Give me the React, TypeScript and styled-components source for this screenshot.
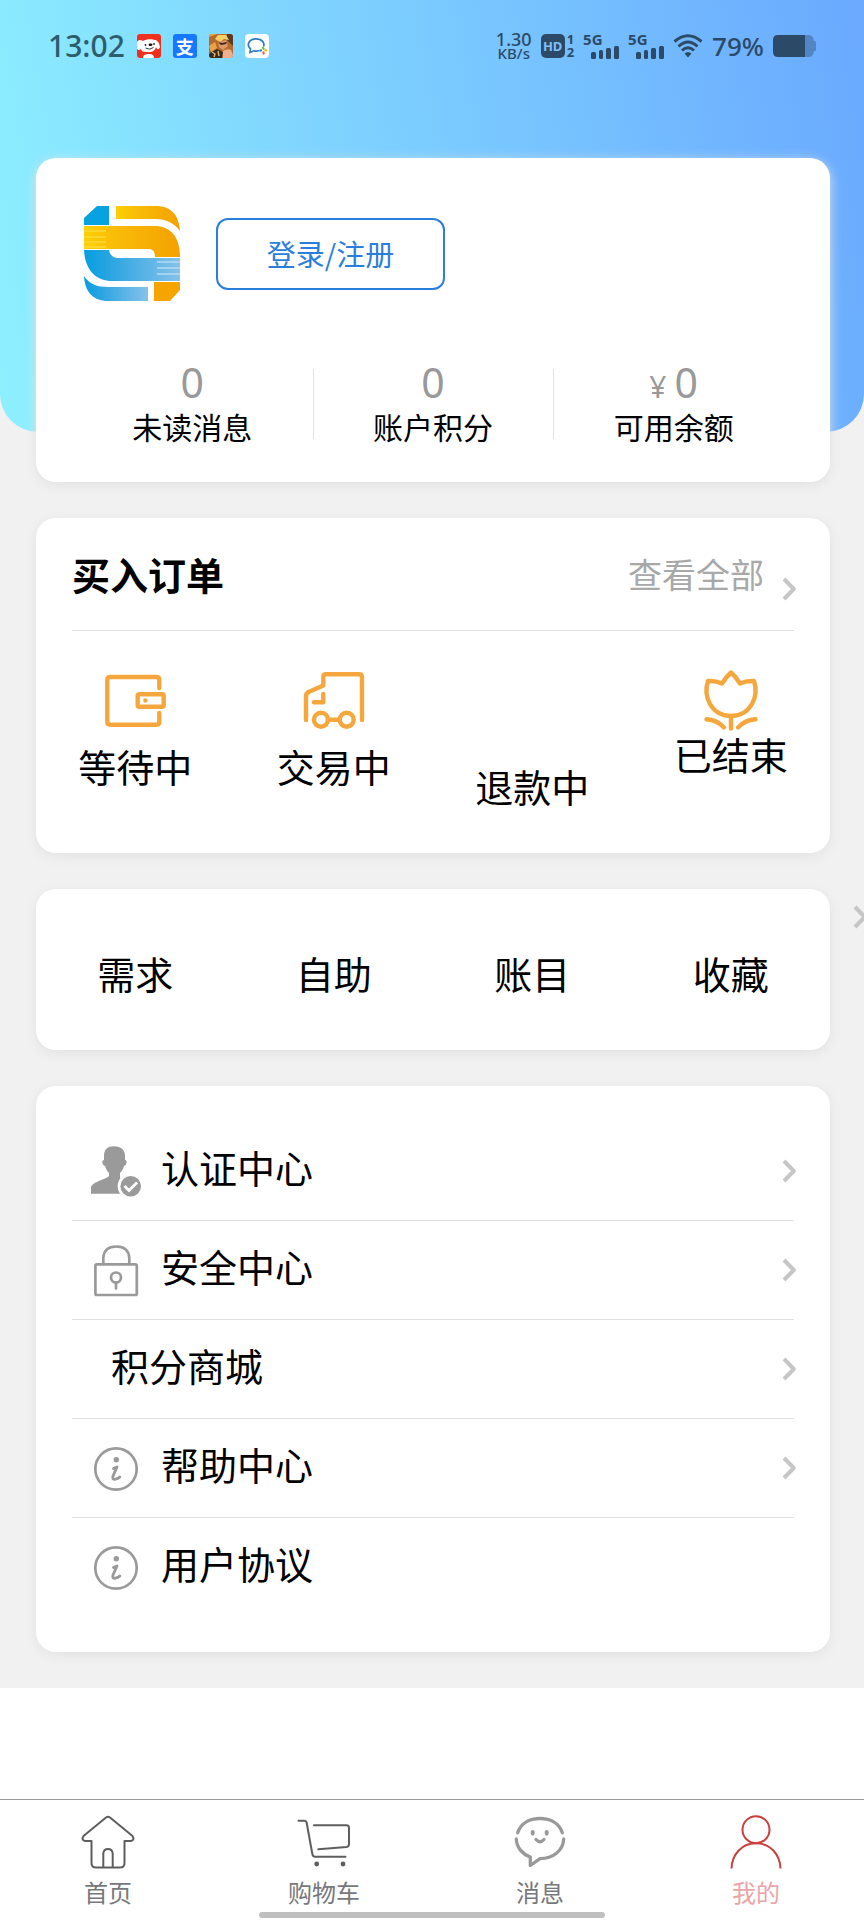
import React from "react";
import styled, { createGlobalStyle } from "styled-components";

const GlobalStyle = createGlobalStyle`
  *, *::before, *::after { box-sizing: border-box; }
  body {
    margin: 0;
    background: #fff;
    color: #000;
    font-family: "Noto Sans CJK SC", "Noto Sans", sans-serif;
  }
  a { color: inherit; text-decoration: none; }
  h2, ul, dl, dd, dt { margin: 0; padding: 0; }
  ul { list-style: none; }
  svg { display: block; flex: none; overflow: visible; }
`;

const Screen = styled.div`
  display: flex;
  flex-direction: column;
  min-height: 100vh;
`;

const Main = styled.main`
  background: #f1f1f1;
  overflow: hidden;
`;

const Hero = styled.header`
  height: 432px;
  padding: 32px 48px 0;
  border-radius: 0 0 38px 38px;
  background: linear-gradient(80deg, #8df0ff 0%, #6aa9ff 100%);
`;

/* Status bar */

const StatusBar = styled.div`
  display: flex;
  justify-content: space-between;
  align-items: center;
  height: 28px;
  font-family: "Noto Sans", sans-serif;
  white-space: nowrap;
`;

const StatusSide = styled.div<{ $color: string; $gap: number }>`
  display: flex;
  align-items: center;
  gap: ${(p) => p.$gap}px;
  color: ${(p) => p.$color};
`;

const Clock = styled.time`
  font-size: 30px;
  font-weight: 500;
  line-height: 28px;
`;

const AppBadge = styled.span`
  display: grid;
  place-items: center;
  width: 24px;
  height: 24px;
  border-radius: 3px;
  background: #1677ff;
  color: #fff;
  font-family: "Noto Sans CJK SC", sans-serif;
  font-size: 18px;
  font-weight: 700;
  line-height: 24px;
`;

const NetSpeed = styled.div`
  display: flex;
  flex-direction: column;
  align-items: center;
  font-size: 15px;
  font-weight: 500;
  line-height: 14px;
`;

const SpeedValue = styled.span`
  font-size: 18px;
`;

const HdMark = styled.div`
  display: flex;
  align-items: center;
  gap: 2px;
`;

const HdBox = styled.span`
  display: grid;
  place-items: center;
  width: 24px;
  height: 24px;
  border-radius: 5px;
  background: currentColor;
  line-height: 24px;
`;

const HdText = styled.span`
  color: #7fbffa;
  font-size: 13px;
  font-weight: 700;
`;

const SimNumbers = styled.span`
  display: flex;
  flex-direction: column;
  font-size: 13px;
  font-weight: 700;
  line-height: 13px;
`;

const Signal = styled.div`
  display: flex;
  flex-direction: column;
  width: 36px;
  height: 26px;
`;

const SignalLabel = styled.span`
  font-size: 15px;
  font-weight: 700;
  line-height: 13px;
`;

const SignalBars = styled.svg`
  align-self: flex-end;
`;

const BatteryText = styled.span`
  font-size: 26px;
  font-weight: 500;
  line-height: 28px;
`;

/* Cards */

const Cards = styled.div`
  display: flex;
  flex-direction: column;
  gap: 36px;
  margin-top: -274px;
  padding: 0 34px 36px 36px;
`;

const Card = styled.section`
  position: relative;
  border-radius: 20px;
  background: #fff;
  box-shadow: 0 3px 12px #e2e2e2;
`;

const ProfileCard = styled(Card)`
  padding: 36px;
`;

const Profile = styled.div`
  display: flex;
  align-items: center;
  gap: 36px;
  height: 120px;
  padding-left: 12px;
`;

const LoginButton = styled.button`
  width: 229px;
  height: 72px;
  padding: 0 0 2px;
  border: 2px solid #2a7fdb;
  border-radius: 12px;
  background: #fff;
  color: #2a7fdb;
  font-family: inherit;
  font-size: 29px;
  line-height: 40px;
  cursor: pointer;
`;

const Stats = styled.dl`
  display: grid;
  grid-template-columns: repeat(3, 1fr);
  margin-top: 48px;
`;

const Stat = styled.div`
  display: flex;
  flex-direction: column-reverse;
  align-items: center;
  gap: 4px;

  & + & {
    background: linear-gradient(#e2e2e2, #e2e2e2) left center / 1px 70px no-repeat;
  }
`;

const StatLabel = styled.dt`
  font-size: 30px;
  line-height: 40px;
`;

const StatValue = styled.dd`
  height: 40px;
  color: #999;
  font-family: "Noto Sans", sans-serif;
  font-size: 41px;
  line-height: 40px;
`;

const Currency = styled.span`
  margin-right: 8px;
  font-size: 30px;
  line-height: 24px;
`;

const CardHeader = styled.div`
  display: flex;
  justify-content: space-between;
  align-items: center;
  height: 113px;
  margin: 0 36px;
  border-bottom: 1px solid #e0e0e0;
`;

const CardTitle = styled.h2`
  font-size: 38px;
  font-weight: 700;
  line-height: 48px;
`;

const ViewAll = styled.a`
  display: flex;
  align-items: center;
  gap: 18px;
  color: #a8a8a8;
  font-size: 34px;
  line-height: 48px;
`;

const LowChevron = styled.span`
  padding-top: 30px;
`;

const ChevronSvg = styled.svg`
  margin-right: -2px;
`;

const Orders = styled.ul`
  display: grid;
  grid-template-columns: repeat(4, 1fr);
  padding: 39px 0 43px;
`;

const OrderLink = styled.a<{ $gap: number }>`
  display: flex;
  flex-direction: column;
  align-items: center;
  gap: ${(p) => p.$gap}px;
  font-size: 38px;
  line-height: 48px;
`;

const OrderIcon = styled.span`
  width: 60px;
  height: 60px;
`;

const Shortcuts = styled.ul`
  display: grid;
  grid-template-columns: repeat(4, 1fr);
  padding: 60px 0 53px;
  text-align: center;
  font-size: 38px;
  line-height: 48px;
`;

const EdgeChevron = styled.span`
  position: absolute;
  top: 16px;
  left: calc(100% + 23px);
`;

const Menu = styled.ul`
  padding: 36px;
`;

const MenuItem = styled.li`
  & + & {
    border-top: 1px solid #e0e0e0;
  }
`;

const MenuLink = styled.a`
  display: flex;
  align-items: center;
  height: 98px;
  padding-left: 18px;
`;

const MenuIcon = styled.span`
  width: 50px;
  height: 52px;
`;

const MenuLabel = styled.span`
  flex: 1;
  padding: 0 21px 8px;
  font-size: 38px;
  line-height: 48px;
`;

/* Tab bar */

const TabBar = styled.nav`
  position: relative;
  display: grid;
  grid-template-columns: repeat(4, 1fr);
  margin-top: auto;
  padding: 15px 0 13px;
  border-top: 1px solid #999;
  background: #fff;
`;

const Tab = styled.a<{ $active?: boolean }>`
  display: flex;
  flex-direction: column;
  align-items: center;
  gap: 8px;
  color: ${(p) => (p.$active ? "#eaa4a6" : "#77787c")};
  font-size: 24px;
  line-height: 30px;
`;

const HomeIndicator = styled.span`
  position: absolute;
  bottom: 2px;
  left: 30%;
  right: 30%;
  height: 6px;
  border-radius: 3px;
  background: #bfbfbf;
`;

/* Drawings */

const DogIcon = () => (
  <svg width="24" height="24" viewBox="0 0 24 24" aria-hidden="true">
    <rect width="24" height="24" rx="3" fill="#f0301e" />
    <path d="M0 8C2 5 4 6 6 7C9 5 15 5 18 6C20 6 22 8 23 13C22 16 20 16 19 13C18 17 15 18 13 18H9C6 18 4 17 4 15C2 17 0 16 0 14Z" fill="#fff" />
    <path d="M6 24C6 21 8 20 12 20C15 20 17 21 17 24Z" fill="#fff" />
    <circle cx="8.500" cy="11" r="0.900" fill="#222" />
    <circle cx="17" cy="10" r="0.900" fill="#222" />
    <ellipse cx="13.500" cy="10.800" rx="2" ry="1.200" fill="#111" />
    <path d="M8.500 14Q12.500 16.500 16.500 13.500" fill="none" stroke="#222" strokeWidth="0.900" />
  </svg>
);

const GameIcon = () => (
  <svg width="24" height="24" viewBox="0 0 24 24" aria-hidden="true">
    <rect width="24" height="24" rx="3" fill="#b8692c" />
    <path d="M0 3L8 0H3Q0 0 0 3ZM0 12L6 8L8 14L2 18Z" fill="#e9a544" />
    <path d="M18 0H21Q24 0 24 3V12L18 6Z" fill="#5b3a24" />
    <path d="M6 5L9 1L17 1L20 6L15 5L11 8Z" fill="#f3d167" />
    <path d="M9 8L17 6L19 12L14 16L10 13Z" fill="#dc9a6c" />
    <path d="M9 8L13 9L18 8L17 10L12 11Z" fill="#3f241a" />
    <path d="M13 18Q17 14 22 16L24 21Q24 24 21 24H14Z" fill="#eeb08f" />
    <path d="M1 19L8 15L14 18L13 24H3Q0 24 0 21Z" fill="#38291f" />
    <path d="M3 18L6 20L5 23M9 17L10 22" fill="none" stroke="#d8b06a" strokeWidth="1.500" />
  </svg>
);

const WorkChatIcon = () => (
  <svg width="24" height="24" viewBox="0 0 24 24" aria-hidden="true">
    <rect width="24" height="24" rx="4" fill="#fff" />
    <path d="M14.500 16.500Q11.500 17.500 9 16.800L5 18.500L5.500 15C1 11 4 4.800 11 4.800C17 4.800 20 9 18.500 12.500" fill="none" stroke="#2a7bc8" strokeWidth="1.700" />
    <path d="M17.500 13L19 15.500" stroke="#57b947" strokeWidth="2" />
    <path d="M19.500 15.500L22 17" stroke="#f4b400" strokeWidth="2" />
    <path d="M18.800 20.500L18.300 17.500" stroke="#ec5b32" strokeWidth="2" />
    <path d="M14.500 16.800L17 16.300" stroke="#2a7bc8" strokeWidth="2" />
  </svg>
);

const SignalMark = () => (
  <Signal>
    <SignalLabel>5G</SignalLabel>
    <SignalBars width="28" height="13" viewBox="0 0 28 13" fill="currentColor" aria-hidden="true">
      <rect x="0" y="6" width="5" height="7" rx="1.500" />
      <rect x="8" y="4" width="4" height="9" rx="1.500" />
      <rect x="15" y="2" width="5" height="11" rx="1.500" />
      <rect x="23" y="0" width="5" height="13" rx="1.500" />
    </SignalBars>
  </Signal>
);

const WifiMark = () => (
  <svg width="30" height="24" viewBox="0 0 30 24" fill="none" stroke="currentColor" strokeWidth="3" aria-hidden="true">
    <path d="M1.500 7.500Q15 -4 28.500 7.500" />
    <path d="M5.500 12.500Q15 3.500 24.500 12.500" />
    <path d="M9 16.500Q15 11 21 16.500" />
    <path d="M11.500 19.500Q15 16.500 18.500 19.500L15 23.500Z" fill="currentColor" stroke="none" />
  </svg>
);

const BatteryMark = () => (
  <svg width="43" height="22" viewBox="0 0 43 22" aria-hidden="true">
    <path d="M32 0H36Q40 0 41 6H42Q43 6 43 8V14Q43 16 42 16H41Q40 22 36 22H32Z" fill="currentColor" opacity="0.400" />
    <path d="M5 0H32V22H5Q0 22 0 17V5Q0 0 5 0Z" fill="currentColor" />
  </svg>
);

const Logo = () => (
  <svg width="96" height="96" viewBox="0 0 96 96" role="img" aria-label="logo">
    <defs>
      <linearGradient id="gold" x1="0" x2="1">
        <stop offset="0" stopColor="#fdd000" />
        <stop offset="0.300" stopColor="#f9bd08" />
        <stop offset="1" stopColor="#f4a100" />
      </linearGradient>
      <linearGradient id="sky" x1="0" x2="1">
        <stop offset="0" stopColor="#059fe0" />
        <stop offset="0.300" stopColor="#2fa6e2" />
        <stop offset="1" stopColor="#86c2ea" />
      </linearGradient>
    </defs>
    <path d="M0 12L13 0H25V19H0Z" fill="#06a3e0" />
    <path d="M32 0H72C86 0 95 8 96 25C90 17 82 13 72 13H32Z" fill="url(#gold)" />
    <path d="M0 20H70C87 20 96 31 96 51H71C71 46 69 43 64 43H0Z" fill="url(#gold)" />
    <path d="M0 44H25C26 49 29 52 34 52H96V75H28C12 75 1 64 0 44Z" fill="url(#sky)" />
    <path d="M0 70C5 78 13 81 24 81H64V95H24C9 95 1 86 0 70Z" fill="url(#sky)" />
    <path d="M70 76H96V84L86 95H70Z" fill="#f5a400" />
    <path d="M0 25H22M0 31H22M0 36H22M0 41H22" stroke="#ffe250" strokeWidth="1.200" />
    <path d="M73 56H96M73 62H96M73 68H96" stroke="#b4daf4" strokeWidth="1.300" />
  </svg>
);

const Chevron = () => (
  <ChevronSvg width="14" height="24" viewBox="0 0 14 24" fill="none" stroke="#c6c6c6" strokeWidth="4" strokeLinejoin="round" aria-hidden="true">
    <path d="M2 2L11.800 12L2 22" />
  </ChevronSvg>
);

const orange = {
  width: 60,
  height: 60,
  viewBox: "0 0 60 60",
  fill: "none",
  stroke: "#f5a73d",
  strokeWidth: 4.4,
  strokeLinecap: "round" as const,
  strokeLinejoin: "round" as const,
  "aria-hidden": true,
};

const WalletIcon = () => (
  <svg {...orange}>
    <path d="M54.300 18V10Q54.300 7 51.300 7H5.300Q2.300 7 2.300 10V51.700Q2.300 54.700 5.300 54.700H51.300Q54.300 54.700 54.300 51.700V43" />
    <rect x="32.700" y="24.200" width="26" height="12.600" rx="1.500" />
    <circle cx="40.400" cy="30.500" r="2.200" fill="#f5a73d" stroke="none" />
  </svg>
);

const TruckIcon = () => (
  <svg {...orange}>
    <path d="M2 50V26Q2 23.500 4.500 22L19.300 15.500V7Q19.300 4.300 22 4.300H55Q58 4.300 58 7.300V50" />
    <path d="M19.300 24V32.300H10" />
    <circle cx="17" cy="49.700" r="7" />
    <circle cx="42.700" cy="49.700" r="7" />
    <path d="M24 49.700H35.700" />
  </svg>
);

const TulipIcon = () => (
  <svg {...orange}>
    <path d="M30 2.500Q35 7 39 13.500Q45 10.500 53 11Q57 23 51 34Q44 46 30 46Q16 46 9 34Q3 23 7 11Q15 10.500 21 13.500Q25 7 30 2.500Z" />
    <path d="M30 46V58.500M54.500 49.300Q44 50 37 57.500M5.500 49.300Q16 50 23 57.500" />
  </svg>
);

const grey = {
  width: 52,
  height: 52,
  viewBox: "0 0 52 52",
  fill: "none",
  stroke: "#9a9a9a",
  strokeWidth: 2.7,
  strokeLinecap: "round" as const,
  "aria-hidden": true,
};

const VerifiedIcon = () => (
  <svg {...grey}>
    <path d="M14 11C14 4 18 1.300 24 1.300C31 1.300 35 5 35 11V15C37.500 15 37 20 34 21C33 25 31 27 30 28V33C34 36 44 37 48 42V48.700H1V43C1 37 15 35 19 31V28C17 26 16 24 15 21C12 20 11.500 15 14 15Z" fill="#9a9a9a" stroke="none" />
    <circle cx="40.700" cy="41.300" r="13" fill="#fff" stroke="none" />
    <circle cx="40.700" cy="41.300" r="10.300" fill="#9a9a9a" stroke="none" />
    <path d="M34.500 41L39 45.500L47 37.500" stroke="#fff" strokeLinecap="butt" />
  </svg>
);

const LockIcon = () => (
  <svg {...grey}>
    <rect x="5.400" y="20.400" width="41.400" height="30.600" rx="1.500" />
    <path d="M13.300 20V14Q14 2.500 26.300 2.500Q38.500 2.500 39.300 14V20" />
    <circle cx="26" cy="33.500" r="5" />
    <path d="M26 39V44.500" />
  </svg>
);

const InfoIcon = () => (
  <svg {...grey}>
    <circle cx="26" cy="27" r="20.700" />
    <circle cx="26.300" cy="17.700" r="2.700" fill="#9a9a9a" stroke="none" />
    <path d="M23.500 26.500L27 25L23 34Q22 38 25.500 37.200Q28.500 36.500 29.800 35" strokeWidth="2.900" strokeLinejoin="round" />
  </svg>
);

const tabIcon = {
  width: 54,
  height: 54,
  viewBox: "0 0 54 54",
  fill: "none",
  stroke: "#5e5e5e",
  strokeWidth: 2,
  strokeLinecap: "round" as const,
  strokeLinejoin: "round" as const,
  "aria-hidden": true,
};

const HomeIcon = () => (
  <svg {...tabIcon}>
    <path d="M25 2.500Q27 1 29 2.500L51.500 21Q54 25 50 26H43.500V48Q43.500 52.500 39 52.500H15Q10.500 52.500 10.500 48V26H4Q0 25 2.500 21Z" />
    <path d="M22.300 52V38.500Q22.800 34 27 34Q31.200 34 31.700 38.500V52" />
  </svg>
);

const CartIcon = () => (
  <svg {...tabIcon}>
    <path d="M1.500 5.700H7.500Q9.300 5.700 9.600 7.500L15.300 38.700Q15.800 41.700 18 41.700H48.500" />
    <path d="M17 10.300H49.500Q52 10.300 52 12.800V29Q52 31.700 49.500 32L21.300 34.300" />
    <circle cx="19.700" cy="49" r="2.400" fill="#5e5e5e" stroke="none" />
    <circle cx="46" cy="49" r="2.400" fill="#5e5e5e" stroke="none" />
  </svg>
);

const ChatIcon = () => (
  <svg {...tabIcon} stroke="#999" strokeWidth={3.3}>
    <path d="M4.700 17.700C8 8 17 3.500 27 3.500C37 3.500 46 8 49.300 17.700" />
    <path d="M3.300 24C3.500 32 9 39 17.300 42V50.500L27 43.700C40 43.500 50 36 50.700 24" />
    <path d="M23 24.500Q27 29 31 24.500" />
    <ellipse cx="19.700" cy="17.700" rx="2" ry="2.800" fill="#999" stroke="none" />
    <ellipse cx="33.700" cy="17.700" rx="2" ry="2.800" fill="#999" stroke="none" />
  </svg>
);

const PersonIcon = () => (
  <svg {...tabIcon} stroke="#c9403f" strokeLinecap="butt">
    <circle cx="27" cy="14.700" r="13.500" />
    <path d="M2.500 53.500C3 39 13 28.300 27 28.300C41 28.300 51 39 51.500 53.500" />
  </svg>
);

/* Data */

const stats = [
  { label: "未读消息", value: "0" },
  { label: "账户积分", value: "0" },
  { label: "可用余额", value: "0", currency: "¥" },
];

const orders = [
  { label: "等待中", icon: <WalletIcon />, gap: 12 },
  { label: "交易中", icon: <TruckIcon />, gap: 12 },
  { label: "退款中", icon: null, gap: 32 },
  { label: "已结束", icon: <TulipIcon />, gap: 0 },
];

const shortcuts = ["需求", "自助", "账目", "收藏"];

const menu = [
  { label: "认证中心", icon: <VerifiedIcon />, arrow: true },
  { label: "安全中心", icon: <LockIcon />, arrow: true },
  { label: "积分商城", icon: null, arrow: true },
  { label: "帮助中心", icon: <InfoIcon />, arrow: true },
  { label: "用户协议", icon: <InfoIcon />, arrow: false },
];

const tabs = [
  { label: "首页", icon: <HomeIcon /> },
  { label: "购物车", icon: <CartIcon /> },
  { label: "消息", icon: <ChatIcon /> },
  { label: "我的", icon: <PersonIcon />, active: true },
];

export default function App() {
  return (
    <Screen>
      <GlobalStyle />
      <Main>
        <Hero>
          <StatusBar>
            <StatusSide $color="#2d5d6c" $gap={12}>
              <Clock>13:02</Clock>
              <DogIcon />
              <AppBadge>支</AppBadge>
              <GameIcon />
              <WorkChatIcon />
            </StatusSide>
            <StatusSide $color="#2b4a68" $gap={9}>
              <NetSpeed>
                <SpeedValue>1.30</SpeedValue>
                <span>KB/s</span>
              </NetSpeed>
              <HdMark>
                <HdBox>
                  <HdText>HD</HdText>
                </HdBox>
                <SimNumbers>
                  <span>1</span>
                  <span>2</span>
                </SimNumbers>
              </HdMark>
              <SignalMark />
              <SignalMark />
              <WifiMark />
              <BatteryText>79%</BatteryText>
              <BatteryMark />
            </StatusSide>
          </StatusBar>
        </Hero>

        <Cards>
          <ProfileCard>
            <Profile>
              <Logo />
              <LoginButton type="button">登录/注册</LoginButton>
            </Profile>
            <Stats>
              {stats.map((s) => (
                <Stat key={s.label}>
                  <StatLabel>{s.label}</StatLabel>
                  <StatValue>
                    {s.currency && <Currency>{s.currency}</Currency>}
                    {s.value}
                  </StatValue>
                </Stat>
              ))}
            </Stats>
          </ProfileCard>

          <Card>
            <CardHeader>
              <CardTitle>买入订单</CardTitle>
              <ViewAll href="#orders">
                查看全部
                <LowChevron>
                  <Chevron />
                </LowChevron>
              </ViewAll>
            </CardHeader>
            <Orders>
              {orders.map((o) => (
                <li key={o.label}>
                  <OrderLink href="#orders" $gap={o.gap}>
                    <OrderIcon>{o.icon}</OrderIcon>
                    {o.label}
                  </OrderLink>
                </li>
              ))}
            </Orders>
          </Card>

          <Card>
            <Shortcuts>
              {shortcuts.map((label) => (
                <li key={label}>
                  <a href="#shortcut">{label}</a>
                </li>
              ))}
            </Shortcuts>
            <EdgeChevron>
              <Chevron />
            </EdgeChevron>
          </Card>

          <Card>
            <Menu>
              {menu.map((m) => (
                <MenuItem key={m.label}>
                  <MenuLink href="#menu">
                    {m.icon && <MenuIcon>{m.icon}</MenuIcon>}
                    <MenuLabel>{m.label}</MenuLabel>
                    {m.arrow && <Chevron />}
                  </MenuLink>
                </MenuItem>
              ))}
            </Menu>
          </Card>
        </Cards>
      </Main>

      <TabBar>
        {tabs.map((t) => (
          <Tab key={t.label} href="#tab" $active={t.active} aria-current={t.active ? "page" : undefined}>
            {t.icon}
            {t.label}
          </Tab>
        ))}
        <HomeIndicator />
      </TabBar>
    </Screen>
  );
}
